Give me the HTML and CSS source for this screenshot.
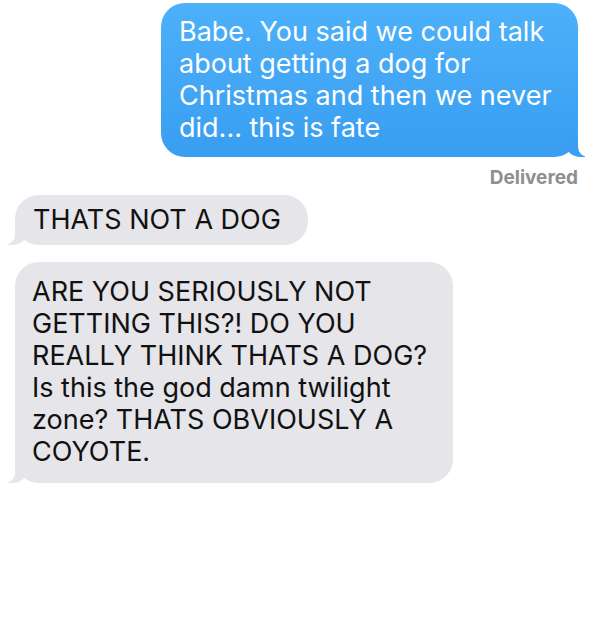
FILE: index.html
```html
<!DOCTYPE html>
<html lang="en">
<head>
    <meta charset="UTF-8">
    <meta name="viewport" content="width=device-width, initial-scale=1.0">
    <title>Messages</title>
    <link rel="stylesheet" href="styles.css">
</head>
<body>
<div id="thread">
    <div class="message sent">Babe. You said we could talk about getting a dog for Christmas and then we never did... this is fate</div>
    <div class="status">Delivered</div>
    <div class="message received first">THATS NOT A DOG</div>
    <div class="message received long">ARE YOU SERIOUSLY NOT GETTING THIS?! DO YOU REALLY THINK THATS A DOG? Is this the god damn twilight zone? THATS OBVIOUSLY A COYOTE.</div>
</div>
</body>
</html>
```

FILE: styles.css
```css
body { margin: 0; background: #fff; font-family: Inter, "Liberation Sans", Arial, sans-serif; }
#thread { display: flex; flex-direction: column; padding: 3px 22px 0 15px; }
.message { position: relative; font-size: 27px; line-height: 32px; padding: 13px 20px 13px 18px; border-radius: 24px; box-sizing: border-box; }
.sent { align-self: flex-end; width: 417px; background: linear-gradient(#4cb0fa, #3a9ef1); color: #fff; }
.received { align-self: flex-start; background: #e5e5ea; color: #111; padding-left: 17px; }
.received.first { margin-bottom: 17px; padding: 9px 27px 9px 18px; }
.received.long { width: 438px; padding-top: 14px; padding-bottom: 15px; }
.status { align-self: flex-end; font-size: 19px; line-height: 22px; font-weight: bold; color: #8e8e93; margin: 10px 0 6px; }

/* tails */
.message::before, .message::after { content: ""; position: absolute; bottom: 0; height: 22px; }
.sent::before { right: -7px; width: 20px; background: #3a9ef1; border-bottom-left-radius: 16px 14px; }
.sent::after { right: -26px; width: 26px; background: #fff; border-bottom-left-radius: 10px; }
.received::before { left: -7px; width: 20px; background: #e5e5ea; border-bottom-right-radius: 16px 14px; }
.received::after { left: -26px; width: 26px; background: #fff; border-bottom-right-radius: 10px; }
```
